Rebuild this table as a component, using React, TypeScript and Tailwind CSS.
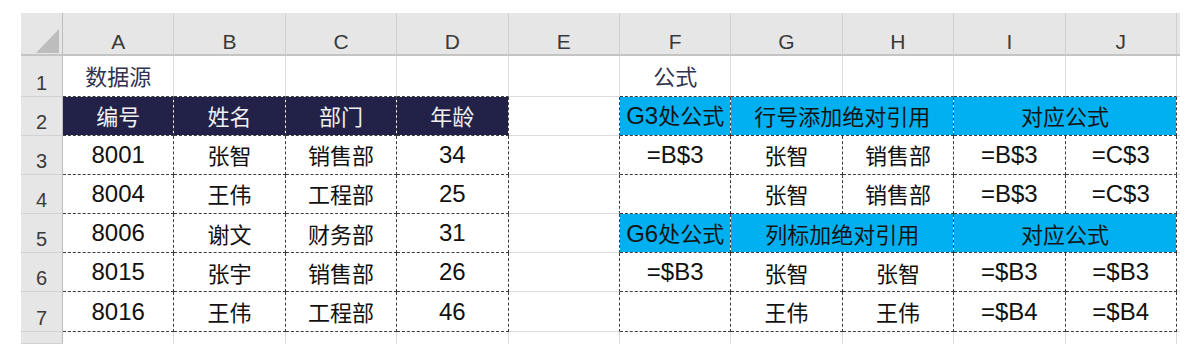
import React from 'react';

type Cell = {
  t?: string;
  span?: boolean;
  dr?: boolean;
  db?: boolean;
  fill?: 'navy' | 'cyan' | 'title';
};

const COLS = ['A', 'B', 'C', 'D', 'E', 'F', 'G', 'H', 'I', 'J'];

// cells inside a table: dashed on the right and bottom
const boxed = (vals: string[]): Cell[] => vals.map(t => ({ t, dr: true, db: true }));

const ROWS: Cell[][] = [
  [
    { t: '数据源', db: true, fill: 'title' },
    { db: true },
    { db: true },
    { db: true },
    {},
    { t: '公式', db: true, fill: 'title' },
    { db: true },
    { db: true },
    { db: true },
    { db: true },
  ],
  [
    ...['编号', '姓名', '部门', '年龄'].map(t => ({ t, dr: true, db: true, fill: 'navy' as const })),
    { dr: true },
    { t: 'G3处公式', dr: true, db: true, fill: 'cyan' },
    { t: '行号添加绝对引用', span: true, dr: true, db: true, fill: 'cyan' },
    { t: '对应公式', span: true, dr: true, db: true, fill: 'cyan' },
  ],
  [...boxed(['8001', '张智', '销售部', '34']), { dr: true }, ...boxed(['=B$3', '张智', '销售部', '=B$3', '=C$3'])],
  [...boxed(['8004', '王伟', '工程部', '25']), { dr: true }, ...boxed(['', '张智', '销售部', '=B$3', '=C$3'])],
  [
    ...boxed(['8006', '谢文', '财务部', '31']),
    { dr: true },
    { t: 'G6处公式', dr: true, db: true, fill: 'cyan' },
    { t: '列标加绝对引用', span: true, dr: true, db: true, fill: 'cyan' },
    { t: '对应公式', span: true, dr: true, db: true, fill: 'cyan' },
  ],
  [...boxed(['8015', '张宇', '销售部', '26']), { dr: true }, ...boxed(['=$B3', '张智', '张智', '=$B3', '=$B3'])],
  [...boxed(['8016', '王伟', '工程部', '46']), { dr: true }, ...boxed(['', '王伟', '王伟', '=$B4', '=$B4'])],
];

const CJK = /[\u4e00-\u9fff]/;

// Latin runs are set a bit larger so the digits match the sheet's font
function Txt({ s }: { s: string }) {
  const parts = s.split(/([\u4e00-\u9fff]+)/).filter(Boolean);
  return (
    <span className="leading-none whitespace-nowrap">
      {parts.map((p, i) =>
        CJK.test(p) ? (
          <span key={i} className="font-['Noto_Sans_CJK_SC',sans-serif] text-[22px]">
            {p}
          </span>
        ) : (
          <span key={i} className="font-['Liberation_Sans',sans-serif] text-[24px]">
            {p}
          </span>
        ),
      )}
    </span>
  );
}

function SheetCell({ c }: { c: Cell }) {
  const right = c.dr
    ? 'border-r-[#3c3c3c] [border-right-style:dashed]'
    : 'border-r-[#dcdcdc]';
  const bottom = c.db
    ? 'border-b-[#3c3c3c] [border-bottom-style:dashed]'
    : 'border-b-[#dcdcdc]';
  const fill =
    c.fill === 'navy'
      ? 'bg-[#222248] text-[#f0f0f0] bg-clip-padding'
      : c.fill === 'cyan'
        ? 'bg-[#00b0f0] text-[#141414] bg-clip-padding'
        : c.fill === 'title'
          ? 'text-[#30334f]'
          : 'text-[#111]';
  return (
    <div
      className={`flex items-center justify-center overflow-hidden border-r border-b ${right} ${bottom} ${fill} ${c.span ? 'col-span-2' : ''}`}
    >
      {c.t ? <Txt s={c.t} /> : null}
    </div>
  );
}

function RowHead({ n }: { n?: number }) {
  return (
    <div className="flex items-end justify-center bg-[#e6e6e6] border-r border-r-[#bdbdbd] border-b border-b-[#d2d2d2] font-['Liberation_Sans',sans-serif] text-[20px] leading-[26px] text-[#3a3a3a]">
      {n}
    </div>
  );
}

export default function App() {
  return (
    <div className="w-[1201px] h-[344px] overflow-hidden bg-white pt-[13px] pl-[21px]">
      <div className="grid w-[1159px] h-[331px] grid-cols-[42px_repeat(10,111.4px)_1fr] grid-rows-[43px_40.5px_repeat(6,39.2px)_1fr]">
        {/* ── column headers ─────────────────────────────── */}
        <div className="flex items-end justify-end bg-[#e6e6e6] border-r border-r-[#bdbdbd] border-b-2 border-b-[#c4c4c4] pr-[3px] pb-[1px]">
          <svg width="23" height="24" viewBox="0 0 23 24">
            <polygon points="23,0 23,24 0,24" fill="#bdbdbd" />
          </svg>
        </div>
        {COLS.map(l => (
          <div
            key={l}
            className="flex items-end justify-center bg-[#e6e6e6] bg-[linear-gradient(#e6e6e6_12px,transparent_12px)] border-r border-r-[#d0d0d0] border-b-2 border-b-[#c4c4c4] font-['Liberation_Sans',sans-serif] text-[21px] leading-[24px] text-[#3a3a3a]"
          >
            {l}
          </div>
        ))}
        <div className="bg-[#e6e6e6] border-b-2 border-b-[#c4c4c4]" />

        {/* ── rows 1-7 ───────────────────────────────────── */}
        {ROWS.map((row, r) => (
          <React.Fragment key={r}>
            <RowHead n={r + 1} />
            {row.map((c, i) => (
              <SheetCell key={i} c={c} />
            ))}
            <div className="border-b border-b-[#dcdcdc]" />
          </React.Fragment>
        ))}

        {/* ── partial row 8 ──────────────────────────────── */}
        <RowHead />
        {COLS.map(l => (
          <div key={l} className="border-r border-r-[#dcdcdc]" />
        ))}
        <div />
      </div>
    </div>
  );
}
